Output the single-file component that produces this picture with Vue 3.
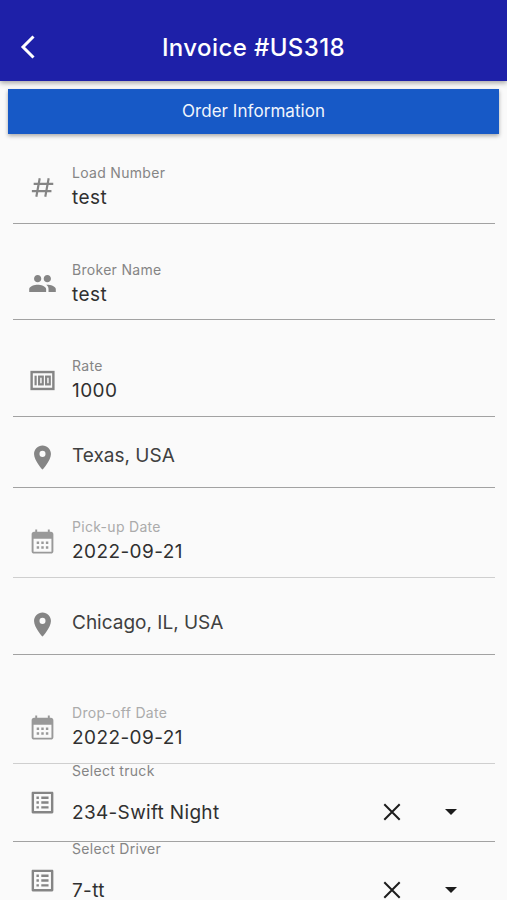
<script setup>
import { ref } from 'vue'

const fields = ref([
  { id: 'load', icon: 'hash', label: 'Load Number', value: 'test', kind: 'text' },
  { id: 'broker', icon: 'people', label: 'Broker Name', value: 'test', kind: 'text' },
  { id: 'rate', icon: 'money', label: 'Rate', value: '1000', kind: 'text' },
  { id: 'origin', icon: 'pin', value: 'Texas, USA', kind: 'place' },
  { id: 'pickup', icon: 'calendar', label: 'Pick-up Date', value: '2022-09-21', kind: 'date' },
  { id: 'destination', icon: 'pin', value: 'Chicago, IL, USA', kind: 'place tall' },
  { id: 'dropoff', icon: 'calendar', label: 'Drop-off Date', value: '2022-09-21', kind: 'date tall' },
  { id: 'truck', icon: 'list', label: 'Select truck', value: '234-Swift Night', kind: 'select' },
  { id: 'driver', icon: 'list', label: 'Select Driver', value: '7-tt', kind: 'select' },
])

const icons = {
  people:
    'M16 11c1.66 0 2.99-1.34 2.99-3S17.66 5 16 5c-1.66 0-3 1.34-3 3s1.34 3 3 3zm-8 0c1.66 0 2.99-1.34 2.99-3S9.66 5 8 5C6.34 5 5 6.34 5 8s1.34 3 3 3zm0 2c-2.33 0-7 1.17-7 3.5V19h14v-2.5c0-2.33-4.67-3.5-7-3.5zm8 0c-.29 0-.62.02-.97.05 1.16.84 1.97 1.97 1.97 3.45V19h6v-2.5c0-2.33-4.67-3.5-7-3.5z',
  pin: 'M12 2C8.13 2 5 5.13 5 9c0 5.25 7 13 7 13s7-7.75 7-13c0-3.87-3.13-7-7-7zm0 9.5a2.5 2.5 0 0 1 0-5 2.5 2.5 0 0 1 0 5z',
  calendar:
    'M19 4h-1V2h-1.6v2H7.6V2H6v2H5c-1.11 0-2 .9-2 2v14c0 1.1.89 2 2 2h14c1.1 0 2-.9 2-2V6c0-1.1-.9-2-2-2zm.4 16.4H4.6V9.8h14.8v10.6zM7.2 12h2v2h-2zm3.8 0h2v2h-2zm3.8 0h2v2h-2zM7.2 16h2v2h-2zm3.8 0h2v2h-2zm3.8 0h2v2h-2z',
  list: 'M19 5v14H5V5h14m1.1-2H3.9c-.5 0-.9.4-.9.9v16.2c0 .4.4.9.9.9h16.2c.4 0 .9-.5.9-.9V3.9c0-.5-.5-.9-.9-.9zM11 7h6v2h-6V7zm0 4h6v2h-6v-2zm0 4h6v2h-6v-2zM7 7h2v2H7V7zm0 4h2v2H7v-2zm0 4h2v2H7v-2z',
}

function clearField(field) {
  field.value = ''
}
</script>

<template>
  <div class="screen">
    <header class="app-bar">
      <button class="back" aria-label="Back">
        <svg viewBox="0 0 16 26"><path d="M13.5 2.5 3 13l10.5 10.5" /></svg>
      </button>
      <h1>Invoice #US318</h1>
    </header>

    <button class="section">Order Information</button>

    <main class="form">
      <div v-for="field in fields" :key="field.id" class="field" :class="field.kind">
        <svg class="icon" viewBox="0 0 24 24">
          <g v-if="field.icon === 'hash'" class="stroke">
            <path d="M9.7 4.3 6.9 19.7M17.1 4.3l-2.8 15.4M4.7 9h16.2M3.2 15h16.2" />
          </g>
          <g v-else-if="field.icon === 'money'" class="stroke note">
            <rect class="frame" x="3" y="5" width="18" height="14" />
            <path d="M6.3 8v8" />
            <rect x="9.2" y="8.8" width="3" height="6.4" />
            <rect x="15" y="8.8" width="3" height="6.4" />
          </g>
          <path v-else :d="icons[field.icon]" />
        </svg>
        <div class="content">
          <span v-if="field.label" class="label">{{ field.label }}</span>
          <span class="value">{{ field.value }}</span>
        </div>
        <div v-if="field.kind === 'select'" class="actions">
          <button aria-label="Clear" @click="clearField(field)">
            <svg class="clear" viewBox="0 0 18 18"><path d="m1.3 1.3 15.4 15.4M16.7 1.3 1.3 16.7" /></svg>
          </button>
          <button aria-label="Open">
            <svg class="caret" viewBox="0 0 12 6"><path d="M0 0h12L6 6z" /></svg>
          </button>
        </div>
      </div>
    </main>
  </div>
</template>

<style>
body {
  margin: 0;
  background: #fafafa;
}
</style>

<style scoped>
.screen {
  box-sizing: border-box;
  height: 900px;
  overflow: hidden;
  background: #fafafa;
  color: #303030;
  font-family: Inter, 'Liberation Sans', sans-serif;
}

button {
  display: flex;
  align-items: center;
  justify-content: center;
  padding: 0;
  border: 0;
  background: none;
  font: inherit;
}

.app-bar {
  box-sizing: border-box;
  display: grid;
  grid-template-columns: 56px 1fr 56px;
  align-items: center;
  height: 81px;
  padding-top: 13px;
  background: #1e20a8;
  box-shadow: 0 2px 5px rgba(0, 0, 0, 0.35);
  color: #fff;
}

.app-bar h1 {
  margin: 0;
  padding-top: 2px;
  font-size: 24px;
  font-weight: 500;
  line-height: 30px;
  letter-spacing: 0.4px;
  text-align: center;
}

.back svg {
  width: 16px;
  height: 26px;
  fill: none;
  stroke: #fff;
  stroke-width: 3;
}

.section {
  width: 491px;
  height: 45px;
  margin: 8px 8px 0;
  padding-bottom: 2px;
  background: #1759c6;
  box-shadow: 0 2px 4px rgba(0, 0, 0, 0.32);
  color: #f0f5fc;
  font-size: 17px;
  letter-spacing: 0.05px;
}

.form {
  padding: 0 12px 0 13px;
}

.field {
  box-sizing: border-box;
  display: flex;
  align-items: flex-end;
  height: 96.5px;
  padding-left: 15px;
  border-bottom: 1px solid #a2a2a2;
}

.field:first-child {
  height: 89.5px;
}

.icon {
  flex: none;
  width: 29px;
  height: 29px;
  margin-bottom: 21px;
  fill: #858585;
}

.stroke {
  fill: none;
  stroke: #858585;
  stroke-width: 1.8;
}

.note .frame {
  stroke-width: 2;
}

.content {
  display: flex;
  flex: 1;
  flex-direction: column;
  gap: 2px;
  margin-left: 15px;
  padding-bottom: 11.5px;
}

.label {
  color: #858585;
  font-size: 14px;
  line-height: 20px;
  letter-spacing: 0.3px;
}

.value {
  font-size: 19px;
  line-height: 26px;
  letter-spacing: 0.42px;
}

.place {
  height: 71.5px;
}

.place.tall {
  height: 77px;
}

.place .icon {
  margin-bottom: 15px;
}

.place .content {
  padding-bottom: 18px;
}

.place .value {
  color: #404040;
  letter-spacing: 0;
}

.date {
  height: 90px;
  border-color: #cfcfcf;
}

.date.tall {
  height: 109px;
}

.date .icon {
  fill: #999;
}

.date .content {
  padding-bottom: 12.5px;
}

.date .label {
  color: #ababab;
}

.select {
  height: 78px;
}

.select .icon {
  margin-bottom: 24px;
}

.select .content {
  gap: 22px;
  padding-bottom: 18px;
}

.select .value {
  line-height: 20px;
  letter-spacing: 0.32px;
}

.actions {
  display: flex;
  gap: 11px;
  margin-right: 20.5px;
  padding-bottom: 5px;
}

.actions button {
  width: 48px;
  height: 48px;
}

.clear {
  width: 18px;
  height: 18px;
  stroke: #1c1c1c;
  stroke-width: 2;
}

.caret {
  width: 12px;
  height: 6px;
  fill: #1c1c1c;
}
</style>
